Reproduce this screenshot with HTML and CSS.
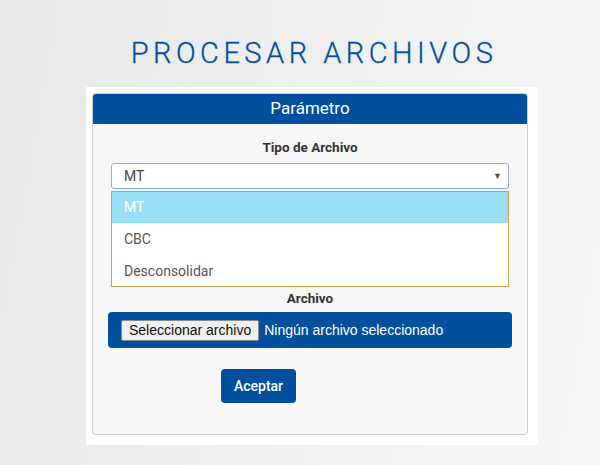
FILE: index.html
```html
<!DOCTYPE html>
<html lang="es">
<head>
    <meta charset="UTF-8">
    <meta name="viewport" content="width=device-width, initial-scale=1.0">
    <title>Procesar Archivos</title>
    <link rel="stylesheet" href="styles.css">
</head>
<body>
    <div class="page">
        <h1 class="page-title">PROCESAR ARCHIVOS</h1>

        <div class="wrapper">
            <div class="panel">
                <div class="panel-heading">Parámetro</div>
                <div class="panel-body">
                    <!-- Tipo de archivo -->
                    <label class="field-label">Tipo de Archivo</label>
                    <div class="select-box">
                        <span>MT</span>
                        <span class="caret">&#9660;</span>
                    </div>
                    <ul class="select-options">
                        <li class="selected">MT</li>
                        <li>CBC</li>
                        <li>Desconsolidar</li>
                    </ul>

                    <!-- Archivo -->
                    <label class="field-label archivo-label">Archivo</label>
                    <div class="file-bar">
                        <button class="file-btn">Seleccionar archivo</button>
                        <span class="file-name">Ningún archivo seleccionado</span>
                    </div>

                    <div class="actions">
                        <button class="accept-btn">Aceptar</button>
                    </div>
                </div>
            </div>
        </div>
    </div>
</body>
</html>
```

FILE: styles.css
```css
:root {
    --primary-color: #00509e;
    --panel-border: #cccccc;
    --panel-bg: #f7f7f7;
    --text-color: #333;
}

* {
    margin: 0;
    padding: 0;
    box-sizing: border-box;
}

body {
    font-family: 'Roboto', 'Liberation Sans', sans-serif;
    background: linear-gradient(100deg, #e8e8e8 0%, #f0f0f0 60%, #f7f7f7 100%);
    min-height: 465px;
}

.page {
    padding-top: 36px;
    width: 452px;
    margin-left: 86px;
}

.page-title {
    text-align: center;
    font-family: 'Roboto', sans-serif;
    font-weight: 300;
    font-size: 29px;
    letter-spacing: 4.5px;
    padding-left: 4px;
    color: var(--primary-color);
    line-height: 34px;
    height: 51px;
    -webkit-text-stroke: 0.3px var(--primary-color);
}

.wrapper {
    background: white;
    padding: 6px 10px 10px 6px;
}

.panel {
    border: 1px solid var(--panel-border);
    border-radius: 4px;
    background: var(--panel-bg);
    overflow: hidden;
}

.panel-heading {
    background: var(--primary-color);
    color: white;
    text-align: center;
    font-size: 17px;
    height: 31px;
    line-height: 30px;
    margin: -1px -1px 0 -1px;
    border-radius: 4px 4px 0 0;
}

.panel-body {
    padding: 14px 18px 31px 18px;
}

.field-label {
    display: block;
    text-align: center;
    font-weight: bold;
    font-size: 13.5px;
    line-height: 18px;
    color: var(--text-color);
}

.select-box {
    margin-top: 7px;
    height: 26px;
    background: white;
    border: 1px solid #7fb2e8;
    border-radius: 3px;
    display: flex;
    justify-content: space-between;
    align-items: center;
    padding: 0 6px 0 12px;
    font-size: 14px;
    color: #444;
}

.caret {
    font-size: 9px;
    color: #555;
}

.select-options {
    list-style: none;
    margin-top: 2px;
    border: 1px solid #d0a050;
    background: white;
    font-size: 14px;
    color: #555;
}

.select-options li {
    height: 32px;
    line-height: 32px;
    padding-left: 12px;
}

.select-options li:first-child {
    height: 31px;
    line-height: 31px;
}

.select-options li:last-child {
    height: 31px;
}

.select-options li.selected {
    background: #9bdff6;
    color: white;
}

.archivo-label {
    margin-top: 2px;
}

.file-bar {
    margin: 5px -3px 0 -3px;
    height: 36px;
    background: var(--primary-color);
    border-radius: 4px;
    display: flex;
    align-items: center;
    padding-left: 13px;
    font-family: 'Liberation Sans', Arial, sans-serif;
    font-size: 14px;
}

.file-btn {
    font-family: 'Liberation Sans', Arial, sans-serif;
    font-size: 14px;
    color: #111;
    background: #efefef;
    border: 1px solid #8a8a8a;
    border-radius: 2px;
    height: 21px;
    padding: 0 7px;
}

.file-name {
    color: white;
    margin-left: 5px;
}

.actions {
    margin-top: 21px;
    padding-left: 110px;
}

.accept-btn {
    font-family: 'Roboto', sans-serif;
    font-size: 14px;
    font-weight: 500;
    color: white;
    background: var(--primary-color);
    border: none;
    border-radius: 4px;
    width: 75px;
    height: 34px;
}
```
